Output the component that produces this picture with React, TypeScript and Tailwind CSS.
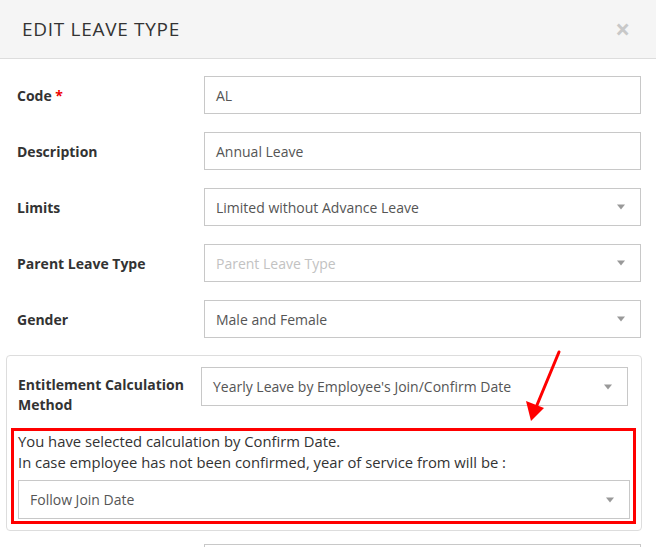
import type { ReactNode } from "react";

const FONT = { fontFamily: '"Open Sans", "Noto Sans", sans-serif' };

function Caret() {
  return (
    <span className="absolute right-[15px] top-1/2 -translate-y-1/2 h-0 w-0 border-x-[4px] border-t-[5px] border-x-transparent border-t-[#999]" />
  );
}

function Field({
  value,
  placeholder,
  select,
  className = "",
}: {
  value?: string;
  placeholder?: string;
  select?: boolean;
  className?: string;
}) {
  return (
    <div
      className={`relative flex h-[38px] items-center border border-[#c8c8c8] bg-white pl-[11px] text-[14px] ${className}`}
    >
      {value ? (
        <span className="text-[#555]">{value}</span>
      ) : (
        <span className="text-[#c2c2c2]">{placeholder}</span>
      )}
      {select && <Caret />}
    </div>
  );
}

function Row({ label, children }: { label: ReactNode; children: ReactNode }) {
  return (
    <div className="flex items-center">
      <div className="w-[187px] text-[14px] font-bold text-[#333]">{label}</div>
      <div className="flex-1">{children}</div>
    </div>
  );
}

export default function App() {
  return (
    <div className="relative h-[547px] w-[656px] overflow-hidden bg-white" style={FONT}>
      <div className="flex h-[59px] items-center justify-between border-b border-[#ddd] bg-[#f5f5f5] pl-[22px] pr-[26px]">
        <h1 className="text-[19px] uppercase tracking-[0.7px] text-[#333]">Edit Leave Type</h1>
        <span className="text-[26px] font-bold leading-none text-[#c8c8c8]">×</span>
      </div>

      <div className="flex flex-col gap-[18px] pl-[17px] pr-[15px] pt-[17px]">
        <Row
          label={
            <>
              Code <span className="text-[#e00]">*</span>
            </>
          }
        >
          <Field value="AL" />
        </Row>
        <Row label="Description">
          <Field value="Annual Leave" />
        </Row>
        <Row label="Limits">
          <Field value="Limited without Advance Leave" select />
        </Row>
        <Row label="Parent Leave Type">
          <Field placeholder="Parent Leave Type" select />
        </Row>
        <Row label="Gender">
          <Field value="Male and Female" select />
        </Row>
      </div>

      <div className="ml-[6px] mt-[17px] w-[636px] rounded-[4px] border border-[#ddd] pb-[6px]">
        <div className="ml-[11px] mt-[11px] flex items-start">
          <div className="w-[183px] pt-[8px] text-[14px] font-bold leading-[20px] text-[#333]">
            Entitlement Calculation Method
          </div>
          <Field value="Yearly Leave by Employee's Join/Confirm Date" select className="h-[39px] w-[427px]" />
        </div>
        <div className="ml-[4px] mt-[13px] w-[625px] border-[3px] border-[#f00] pb-[2px] pl-[4px]">
          <p className="text-[14.8px] leading-[21px] text-[#333]">
            You have selected calculation by Confirm Date.
            <br />
            In case employee has not been confirmed, year of service from will be :
          </p>
          <Field value="Follow Join Date" select className="mt-[7px] h-[39px] w-[612px]" />
        </div>
      </div>

      <div className="ml-[204px] mt-[13px] h-[38px] w-[437px] border border-[#c8c8c8]" />

      <svg className="pointer-events-none absolute left-0 top-0" width="656" height="547">
        <line x1="559" y1="352" x2="537" y2="405" stroke="#f00" strokeWidth="3" strokeLinecap="round" />
        <polygon points="531,421 526,401 544,408" fill="#f00" />
      </svg>
    </div>
  );
}
